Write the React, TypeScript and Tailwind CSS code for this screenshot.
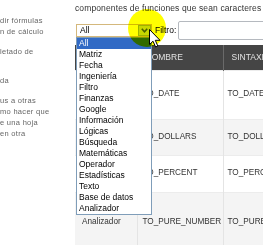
import React from "react";

const sideLines = [
  { text: "dir fórmulas", mt: "mt-[15px]" },
  { text: "n de cálculo", mt: "mt-0" },
  { text: "letado de", mt: "mt-[9px]" },
  { text: "da", mt: "mt-[18px]" },
  { text: "us a otras", mt: "mt-[9px]" },
  { text: "mo hacer que", mt: "mt-0" },
  { text: "e una hoja", mt: "mt-0" },
  { text: "en otra", mt: "mt-0" },
];

const categories = [
  "All",
  "Matriz",
  "Fecha",
  "Ingeniería",
  "Filtro",
  "Finanzas",
  "Google",
  "Información",
  "Lógicas",
  "Búsqueda",
  "Matemáticas",
  "Operador",
  "Estadísticas",
  "Texto",
  "Base de datos",
  "Analizador",
];

const rows = [
  { cat: "", name: "TO_DATE", syntax: "TO_DATE(valor)", h: "h-[49px]", bg: "bg-white" },
  { cat: "", name: "TO_DOLLARS", syntax: "TO_DOLLARS(valor)", h: "h-[36px]", bg: "bg-[#f4f4f4]" },
  { cat: "", name: "TO_PERCENT", syntax: "TO_PERCENT(valor)", h: "h-[37px]", bg: "bg-white" },
  { cat: "Analizador", name: "TO_PURE_NUMBER", syntax: "TO_PURE_NUMBER(valor)", h: "h-[60px]", bg: "bg-[#f4f4f4]" },
];

function Cursor() {
  return (
    <svg width="12" height="19" viewBox="0 0 12 19" className="absolute left-[149px] top-[29px]">
      <path
        d="M0.5 0.5 L0.5 15.5 L4 12.2 L6.6 18 L8.8 17 L6.3 11.3 L11 11.3 Z"
        fill="#ffffff"
        stroke="#000000"
        strokeWidth="1"
        strokeLinejoin="miter"
      />
    </svg>
  );
}

export default function App() {
  return (
    <div className="relative w-[263px] h-[245px] overflow-hidden bg-white flex font-['Liberation_Sans',Arial,sans-serif]">
      {/* columna lateral recortada */}
      <aside className="w-[75px] shrink-0 overflow-hidden text-[7.5px] tracking-[0.3px] text-[#666]">
        {sideLines.map((l) => (
          <div key={l.text} className={`${l.mt} h-[11px] leading-[11px] whitespace-nowrap`}>
            {l.text}
          </div>
        ))}
      </aside>

      <main className="relative flex-1 min-w-0 flex flex-col">
        <p className="h-[16px] leading-[16px] text-[8.5px] tracking-[0.12px] text-[#333] whitespace-nowrap">
          componentes de funciones que sean caracteres a
        </p>

        {/* selector + filtro */}
        <div className="mt-[5px] h-[19px] flex items-center">
          <div className="ml-[1px] w-[76px] h-[13px] shrink-0 border border-[#d4b87c] bg-white flex items-center">
            <span className="flex-1 pl-[3px] text-[8.5px] leading-[11px] text-black">All</span>
            <span className="w-[13px] h-[11px] border border-[#9db3e0] bg-[#c8d7fa] flex items-center justify-center">
              <svg width="7" height="5" viewBox="0 0 7 5">
                <path d="M0.8 0.8 L3.5 3.8 L6.2 0.8" fill="none" stroke="#4d6185" strokeWidth="1.6" />
              </svg>
            </span>
          </div>
          <span className="ml-[3px] text-[8.5px] text-black whitespace-nowrap">Filtro:</span>
          <div className="ml-[2px] w-[120px] h-[19px] shrink-0 border border-[#b5b9bf] rounded-[2px] bg-white" />
        </div>

        {/* tabla de funciones */}
        <table className="mt-[5px] w-[228px] table-fixed border-collapse text-[8.2px] text-[#333]">
          <colgroup>
            <col className="w-[62px]" />
            <col className="w-[86px]" />
            <col className="w-[80px]" />
          </colgroup>
          <thead>
            <tr className="h-[25px] bg-[#454545] text-[#e2e2e2] text-[8.5px]">
              <th className="text-left font-normal pl-[8px] border-r border-[#5c5c5c]">CATEGORÍA</th>
              <th className="text-left font-normal pl-[8px] border-r border-[#6a6a6a]">NOMBRE</th>
              <th className="text-left font-normal pl-[8px]">SINTAXIS</th>
            </tr>
          </thead>
          <tbody>
            {rows.map((r) => (
              <tr key={r.name} className={`${r.h} ${r.bg} border-t border-[#ececec]`}>
                <td className="pl-[7px] border-r border-[#e4e4e4] whitespace-nowrap overflow-hidden">{r.cat}</td>
                <td className="pl-[5px] border-r border-[#e4e4e4] whitespace-nowrap overflow-hidden">{r.name}</td>
                <td className="pl-[4px] whitespace-nowrap overflow-hidden">{r.syntax}</td>
              </tr>
            ))}
          </tbody>
        </table>

        {/* lista desplegada del selector */}
        <ul className="absolute left-[1px] top-[37px] w-[76px] border border-[#7f9db9] bg-white text-[8.5px] text-black">
          {categories.map((c, i) => (
            <li
              key={c}
              className={`h-[11px] leading-[11px] pl-[2px] whitespace-nowrap ${i === 0 ? "bg-[#316ac5] text-white" : ""}`}
            >
              {c}
            </li>
          ))}
        </ul>
      </main>

      {/* resaltado del cursor */}
      <div className="absolute left-[128px] top-[9px] w-[38px] h-[38px] rounded-full bg-[#ffff00] mix-blend-multiply" />
      <Cursor />
    </div>
  );
}
